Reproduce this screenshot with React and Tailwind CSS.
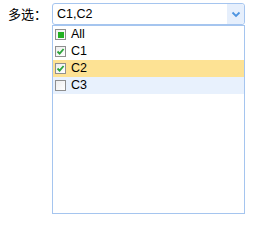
import { useState } from 'react'

const items = [
  { id: 'all', label: 'All' },
  { id: 'c1', label: 'C1' },
  { id: 'c2', label: 'C2' },
  { id: 'c3', label: 'C3' },
]

function Box({ state }) {
  return (
    <span className="flex h-[11px] w-[11px] shrink-0 items-center justify-center border border-[#8f8f8f] bg-gradient-to-br from-[#eeeeee] to-white">
      {state === 'part' ? <span className="h-[6px] w-[6px] bg-[#22b122]" /> : null}
      {state === 'on' ? (
        <svg width="9" height="9" viewBox="0 0 9 9">
          <path d="M1.5 4.5 L3.6 6.6 L7.6 2" fill="none" stroke="#2ca43a" strokeWidth="1.8" />
        </svg>
      ) : null}
    </span>
  )
}

export default function App() {
  const [picked] = useState({ c1: true, c2: true })

  return (
    <div className="h-[241px] w-[263px] bg-white pt-[3px] font-['Liberation_Sans','Noto_Sans_CJK_SC',sans-serif] text-[12.5px] text-black">
      <div className="flex items-start">
        <div className="flex h-[22px] w-[52px] items-center pl-[8px] font-['Noto_Sans_CJK_SC',sans-serif] text-[13px]">多选：</div>
        <div className="w-[193px]">
          <div className="flex h-[22px] items-stretch rounded-[3px] border border-[#a5c5ef] bg-white">
            <div className="flex flex-1 items-center pl-[4px]">C1,C2</div>
            <div className="flex w-[17px] items-center justify-center rounded-r-[3px] bg-[#e6effc]">
              <svg width="10" height="7" viewBox="0 0 10 7">
                <path d="M1.5 1.5 L5 5 L8.5 1.5" fill="none" stroke="#4d94e0" strokeWidth="1.8" />
              </svg>
            </div>
          </div>
          <div className="h-[189px] border border-[#a5c5ef] bg-white">
            {items.map((it) => {
              const state = it.id === 'all' ? 'part' : picked[it.id] ? 'on' : 'off'
              const bg = it.id === 'c2' ? 'bg-[#fde294]' : it.id === 'c3' ? 'bg-[#e8f1fd]' : ''
              return (
                <div key={it.id} className={`flex h-[17px] items-center gap-[5px] pl-[2px] ${bg}`}>
                  <Box state={state} />
                  <span>{it.label}</span>
                </div>
              )
            })}
          </div>
        </div>
      </div>
    </div>
  )
}
